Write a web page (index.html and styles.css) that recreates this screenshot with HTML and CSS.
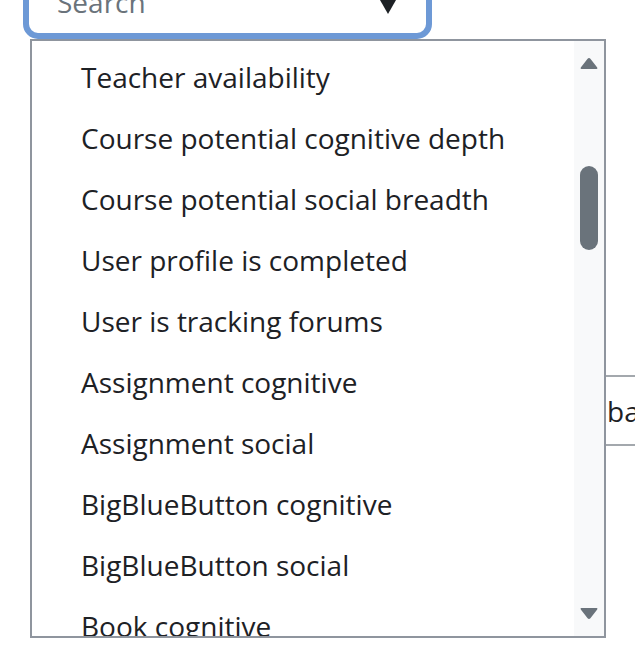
FILE: index.html
```html
<!DOCTYPE html>
<html>
<head>
<meta charset="utf-8">
<link rel="stylesheet" href="styles.css">
</head>
<body>
<div class="page">
  <div class="search">
    <span class="placeholder">Search</span>
    <svg class="caret" width="18" height="14" viewBox="0 0 18 14"><path d="M1 0 H17 L9 14 Z" fill="#1d2125"/></svg>
  </div>
  <div class="behind">
    <div class="behind-cell">background</div>
  </div>
  <div class="listbox">
    <ul class="options">
      <li>Teacher availability</li>
      <li>Course potential cognitive depth</li>
      <li>Course potential social breadth</li>
      <li>User profile is completed</li>
      <li>User is tracking forums</li>
      <li>Assignment cognitive</li>
      <li>Assignment social</li>
      <li>BigBlueButton cognitive</li>
      <li>BigBlueButton social</li>
      <li>Book cognitive</li>
      <li>Book social</li>
    </ul>
    <div class="scrollbar">
      <svg class="arrow up" width="18" height="13" viewBox="0 0 18 13"><path d="M9 1 Q9.8 1 10.4 1.8 L17.2 10.6 Q18 12 16.6 12 H1.4 Q0 12 0.8 10.6 L7.6 1.8 Q8.2 1 9 1 Z" fill="#6a737b"/></svg>
      <div class="thumb"></div>
      <svg class="arrow down" width="18" height="13" viewBox="0 0 18 13"><path d="M9 12 Q9.8 12 10.4 11.2 L17.2 2.4 Q18 1 16.6 1 H1.4 Q0 1 0.8 2.4 L7.6 11.2 Q8.2 12 9 12 Z" fill="#6a737b"/></svg>
    </div>
  </div>
</div>
</body>
</html>
```

FILE: styles.css
```css
html, body {
  margin: 0;
  padding: 0;
  background: #ffffff;
  overflow: hidden;
}
body {
  width: 635px;
  height: 662px;
  font-family: "Open Sans", "Noto Sans", sans-serif;
  color: #1d2125;
}
.page {
  position: relative;
  width: 635px;
  height: 662px;
  overflow: hidden;
}
.search {
  box-sizing: border-box;
  margin: -37px 0 0 23px;
  width: 409px;
  height: 76px;
  border: 6px solid #6d99d6;
  border-radius: 15px;
  background: #fff;
  display: flex;
  align-items: center;
  justify-content: space-between;
  padding: 0 29px 0 28px;
}
.placeholder {
  font-size: 28px;
  color: #6a737b;
  line-height: 45px;
  margin-top: 2px;
}
.caret {
  display: block;
  margin-top: 12px;
}
.behind {
  margin-top: 336px;
  margin-left: 560px;
  width: 400px;
}
.behind-cell {
  box-sizing: border-box;
  height: 71px;
  border-top: 2px solid #a3a8ad;
  border-bottom: 2px solid #a3a8ad;
  padding: 12px 0 0 47px;
  font-size: 28px;
  line-height: 45px;
  color: #1d2125;
  white-space: nowrap;
}
.listbox {
  position: absolute;
  left: 30px;
  top: 39px;
  width: 576px;
  height: 599px;
  box-sizing: border-box;
  border: 2px solid #8f959e;
  background: #fff;
  display: flex;
  overflow: hidden;
}
.options {
  list-style: none;
  margin: 0;
  padding: 6px 0 0 0;
  flex: 1;
  overflow: hidden;
}
.options li {
  font-size: 28px;
  line-height: 45px;
  padding: 8px 0 8px 49px;
  white-space: nowrap;
  color: #1d2125;
}
.scrollbar {
  width: 30px;
  flex: none;
  background: #f8f9fa;
  display: flex;
  flex-direction: column;
  align-items: center;
}
.arrow {
  display: block;
}
.arrow.up {
  margin-top: 16px;
}
.thumb {
  width: 18px;
  height: 84px;
  border-radius: 9px;
  background: #6a737b;
  margin-top: 96px;
}
.arrow.down {
  margin-top: auto;
  margin-bottom: 16px;
}
```
